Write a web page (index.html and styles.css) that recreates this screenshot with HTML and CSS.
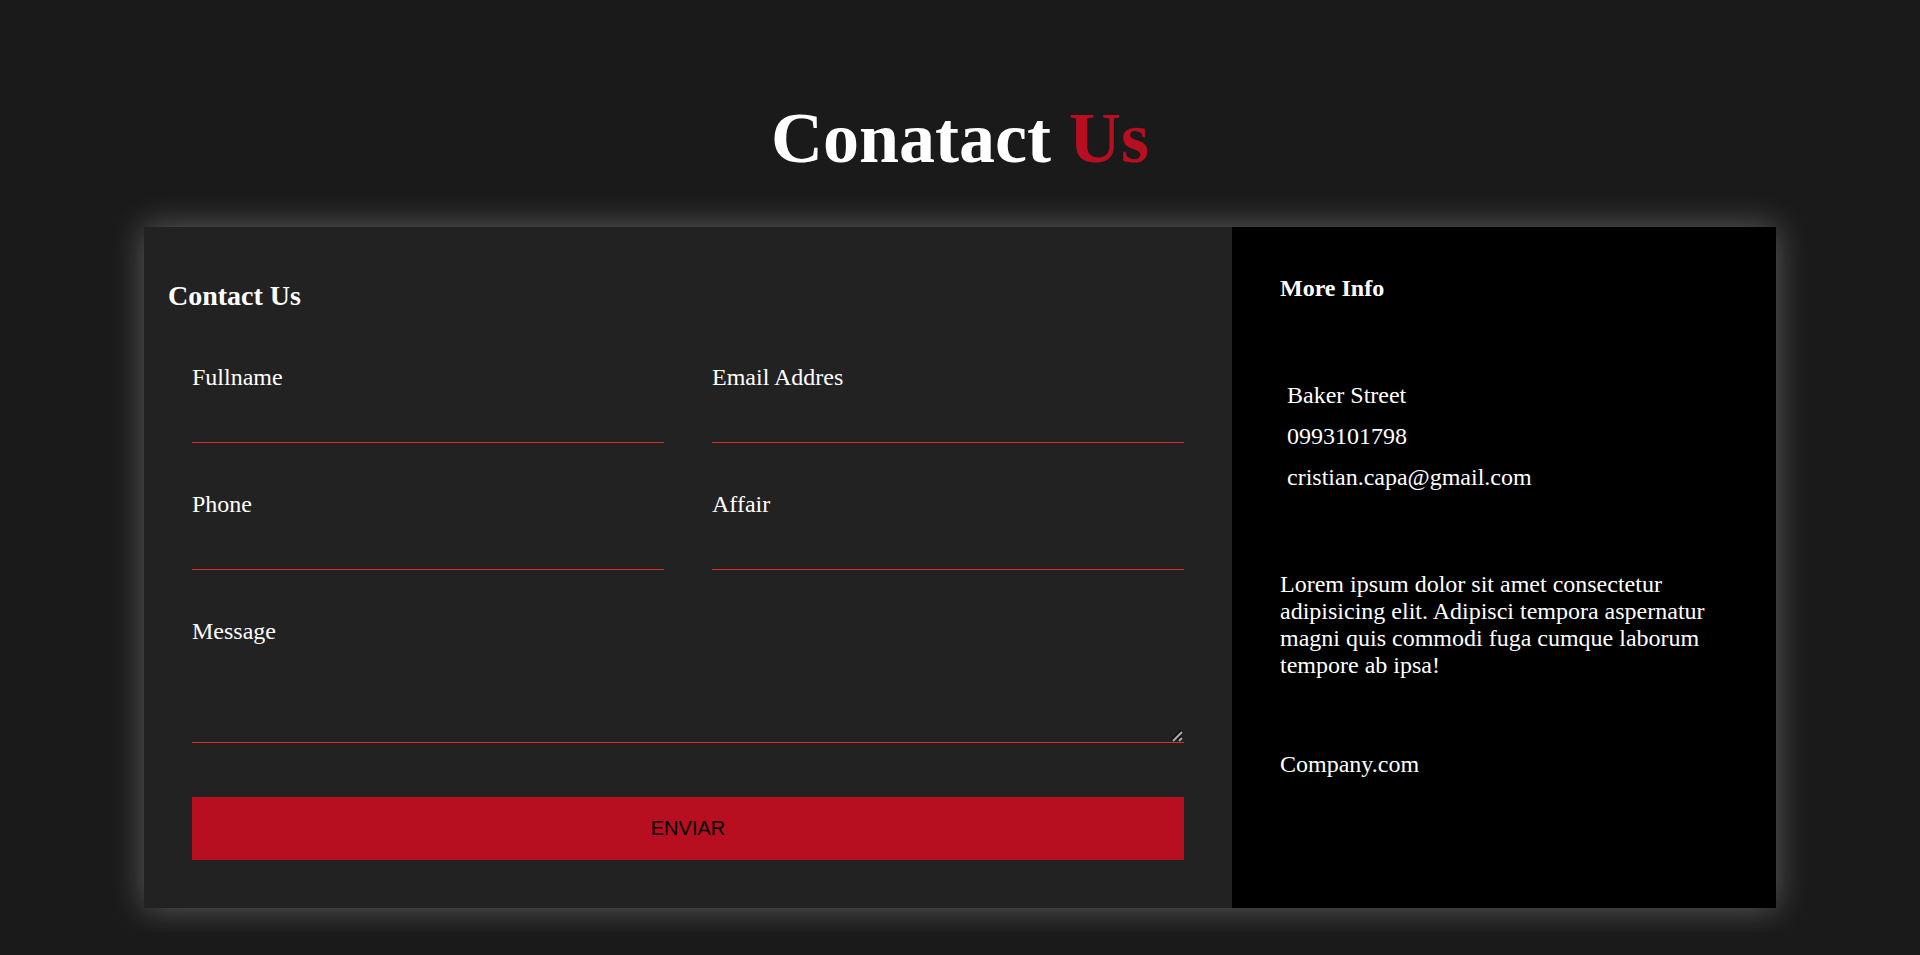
FILE: index.html
```html
<!DOCTYPE html>
<html lang="en">
<head>
  <meta charset="utf-8">
  <meta name="viewport" content="width=device-width, initial-scale=1">
  <title>Contact Us</title>
  <link rel="stylesheet" href="styles.css">
</head>
<body>
  <main class="content">
    <h1 class="logo">Conatact <span class="logo-accent">Us</span></h1>
    <div class="contact-wrapper">
      <section class="contact-form">
        <h2 class="form-title">Contact Us</h2>
        <form class="form-grid">
          <div class="field">
            <label for="fullname">Fullname</label>
            <input type="text" id="fullname" name="fullname">
          </div>
          <div class="field">
            <label for="email">Email Addres</label>
            <input type="email" id="email" name="email">
          </div>
          <div class="field">
            <label for="phone">Phone</label>
            <input type="tel" id="phone" name="phone">
          </div>
          <div class="field">
            <label for="affair">Affair</label>
            <input type="text" id="affair" name="affair">
          </div>
          <div class="field block">
            <label for="message">Message</label>
            <textarea id="message" name="message" rows="3"></textarea>
          </div>
          <div class="field block">
            <button type="button">ENVIAR</button>
          </div>
        </form>
      </section>
      <section class="contact-info">
        <h3 class="info-title">More Info</h3>
        <ul class="info-list">
          <li>Baker Street</li>
          <li>0993101798</li>
          <li>cristian.capa@gmail.com</li>
        </ul>
        <p>Lorem ipsum dolor sit amet consectetur adipisicing elit. Adipisci tempora aspernatur magni quis commodi fuga cumque laborum tempore ab ipsa!</p>
        <p>Company.com</p>
      </section>
    </div>
  </main>
</body>
</html>
```
FILE: styles.css
```css
* {
  box-sizing: border-box;
}

body {
  margin: 0;
  background: #1a1a1a;
  color: #fff;
  font-family: "Liberation Serif", "Times New Roman", serif;
  font-size: 24px;
  line-height: 27px;
}

.content {
  width: 85%;
  margin: 0 auto;
  padding: 97px 0 24px;
}

.logo {
  margin: 0 0 47px;
  font-size: 72px;
  line-height: 83px;
  text-align: center;
}

.logo-accent {
  color: #b80f20;
}

.contact-wrapper {
  display: grid;
  grid-template-columns: 2fr 1fr;
  box-shadow: 0 0 32px rgba(255, 255, 255, 0.3);
}

.contact-form {
  padding: 24px;
  background: #222;
}

.form-title {
  margin: 28px 0;
  font-size: 28px;
  line-height: 33px;
}

.form-grid {
  display: grid;
  grid-template-columns: 1fr 1fr;
}

.field {
  padding: 24px;
}

.block {
  grid-column: 1 / 3;
}

.field label {
  display: block;
}

.field input,
.field textarea {
  width: 100%;
  border: 0;
  border-bottom: 1px solid #d32f2f;
  border-radius: 0;
  background: none;
  color: #fff;
  font-family: "Liberation Sans", Arial, sans-serif;
  font-size: 20px;
  outline: 0;
}

.field input {
  display: block;
  height: 52px;
}

.field textarea {
  height: 98px;
  resize: vertical;
}

.field textarea::-webkit-resizer {
  background: url("data:image/svg+xml,%3Csvg xmlns='http://www.w3.org/2000/svg' width='15' height='15'%3E%3Cg fill='none' stroke-width='4' stroke='%23111'%3E%3Cpath d='M3 14L13 4M9 14L13 10'/%3E%3C/g%3E%3Cg fill='none' stroke-width='2' stroke='%23aaa'%3E%3Cpath d='M4 14L13 5M10 14L13 11'/%3E%3C/g%3E%3C/svg%3E") no-repeat right bottom;
}

.field button {
  display: block;
  width: 100%;
  padding: 20px;
  border: 0;
  background: #b80f20;
  color: #000;
  font-family: "Liberation Sans", Arial, sans-serif;
  font-size: 20px;
  line-height: 23px;
  cursor: pointer;
}

.contact-info {
  display: flex;
  flex-direction: column;
  gap: 72px;
  padding: 48px;
  background: #000;
}

.info-title,
.contact-info p {
  margin: 0;
  font-size: 24px;
}

.info-list {
  margin: 0;
  padding: 1px 0;
  list-style: none;
}

.info-list li {
  padding: 7px;
}
```
